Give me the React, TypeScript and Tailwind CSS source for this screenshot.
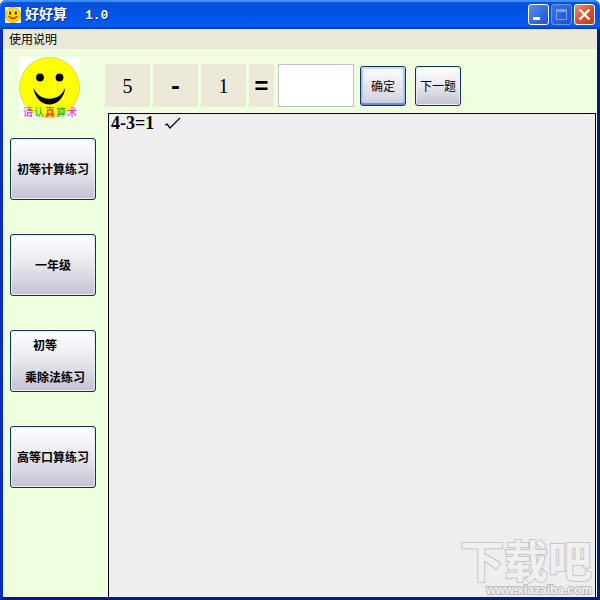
import React from 'react';
import { clsx } from 'clsx';

interface LessonButtonProps {
  children: React.ReactNode;
}

const LESSON_BUTTON =
  'h-[62px] w-full rounded-[3px] border border-[#103458] bg-linear-to-b from-white via-[#e8e7ee] to-[#c3c1d3] text-xs font-bold shadow-[inset_0_0_0_1px_#e6edf3]';

const CAPTION = [
  { char: '请', color: 'text-[#e23bd0]' },
  { char: '认', color: 'text-[#35c04a]' },
  { char: '真', color: 'text-[#f0281e]' },
  { char: '算', color: 'text-[#2fae3e]' },
  { char: '术', color: 'text-[#e23bd0]' },
];

const LessonButton: React.FC<LessonButtonProps> = ({ children }) => (
  <button type="button" className={LESSON_BUTTON}>
    {children}
  </button>
);

const AppIcon = () => (
  <svg viewBox="0 0 16 16" className="size-4 shrink-0" aria-hidden="true">
    <rect width="16" height="16" fill="#fff" />
    <circle cx="8" cy="8" r="7.6" fill="#ffdc00" stroke="#e9a400" strokeWidth="0.8" />
    <circle cx="5" cy="5.500" r="2" fill="#fff3a0" />
    <circle cx="11" cy="5.500" r="2" fill="#fff3a0" />
    <rect x="4.200" y="4.500" width="2" height="3" fill="#3b2500" />
    <rect x="9.800" y="4.500" width="2" height="3" fill="#3b2500" />
    <path d="M3.500 9.500Q8 14.500 12.500 9.500Q8 12 3.500 9.500Z" fill="#d8400e" stroke="#d8400e" />
  </svg>
);

const Smiley = () => (
  <div className="relative size-[61px]">
    <svg viewBox="0 0 61 61" className="size-[61px]" aria-hidden="true">
      <rect width="61" height="61" fill="#fff" />
      <circle cx="30.500" cy="30.500" r="30" fill="#ffff00" stroke="#d8d040" strokeWidth="0.8" />
      <circle cx="21" cy="20.500" r="3.900" fill="#000" />
      <circle cx="40.500" cy="20.500" r="3.900" fill="#000" />
      <path
        d="M14.300 31C16 41 22.500 47.500 30.300 47.500C38.500 47.500 45 41 46.300 31C42.500 38.500 37.500 41.700 30.300 41.700C23.500 41.700 18.500 38.500 14.300 31Z"
        fill="#000"
      />
    </svg>
    <p className="absolute -bottom-px left-1 flex gap-px text-[10px] leading-[15px] font-medium">
      {CAPTION.map(item => (
        <span key={item.char} className={item.color}>
          {item.char}
        </span>
      ))}
    </p>
  </div>
);

const CAPTION_BUTTON = 'flex size-[21px] items-center justify-center rounded-[3px] border';

const TitleBar = () => (
  <header className="flex h-[29px] items-center rounded-t-md bg-linear-to-b from-[#0a50d4] via-[#0054e8] to-[#0a5cf0] px-[5px] text-white shadow-[inset_0_2px_1px_#3d93ff,inset_0_-2px_1px_#0541c4]">
    <AppIcon />
    <h1 className="ml-1 flex items-baseline gap-[18px] text-sm font-bold [text-shadow:1px_1px_#0a2a7c]">
      <span>好好算</span>
      <span className="font-['Liberation_Mono',monospace] text-[13px]">1.0</span>
    </h1>
    <div className="ml-auto flex gap-[2px]">
      <button
        type="button"
        aria-label="最小化"
        className={clsx(CAPTION_BUTTON, 'border-white bg-linear-to-br from-[#5a8cf0] to-[#1d4fd0]')}
      >
        <svg viewBox="0 0 19 19" className="size-[19px]">
          <rect x="4" y="12" width="7" height="3" fill="#fff" />
        </svg>
      </button>
      <button
        type="button"
        aria-label="最大化"
        disabled
        className={clsx(CAPTION_BUTTON, 'border-[#6d95ec] bg-linear-to-br from-[#3d74e6] to-[#1c50d4]')}
      >
        <svg viewBox="0 0 19 19" className="size-[19px]">
          <rect x="4.500" y="4.500" width="10" height="10" fill="none" stroke="#7fa0ee" />
          <rect x="4" y="4" width="11" height="3" fill="#7fa0ee" />
        </svg>
      </button>
      <button
        type="button"
        aria-label="关闭"
        className={clsx(CAPTION_BUTTON, 'border-white bg-linear-to-br from-[#ec8c70] via-[#dc5230] to-[#c03c18]')}
      >
        <svg viewBox="0 0 19 19" className="size-[19px]">
          <path d="M4.500 4.500L14.500 14.500M14.500 4.500L4.500 14.500" stroke="#fff" strokeWidth="2.400" />
        </svg>
      </button>
    </div>
  </header>
);

const Operand: React.FC<{ value: string; className?: string }> = ({ value, className }) => (
  <span className={clsx('flex h-[43px] items-center justify-center bg-[#ece9d8]', className)}>{value}</span>
);

const Exercise = () => (
  <form className="flex items-center pt-[15px] pb-[6px]" onSubmit={e => e.preventDefault()}>
    <div className="flex gap-[3px] font-['Liberation_Serif',serif] text-xl">
      <Operand value="5" className="w-[45px]" />
      <Operand value="-" className="w-[45px] pt-1 font-['Liberation_Mono',monospace] text-2xl font-bold" />
      <Operand value="1" className="w-[45px]" />
      <Operand value="=" className="w-[25px] pt-1 font-['Liberation_Mono',monospace] text-2xl font-bold" />
    </div>
    <input
      type="text"
      aria-label="答案"
      className="ml-1 h-[43px] w-[76px] border border-[#c0c4c8] bg-white px-2 text-xl outline-none"
    />
    <button
      type="submit"
      className="ml-[6px] h-10 w-[46px] rounded-[3px] border border-[#103458] bg-linear-to-b from-white to-[#cfcddd] text-xs shadow-[inset_0_2px_1px_#c2dcfb,inset_0_-2px_1px_#6a88d8,inset_2px_0_1px_#a9c4f4,inset_-2px_0_1px_#a9c4f4]"
    >
      确定
    </button>
    <button
      type="button"
      className="ml-[9px] h-10 w-[46px] rounded-[3px] border border-[#103458] bg-linear-to-b from-white via-[#e8e7ee] to-[#c3c1d3] text-xs whitespace-nowrap shadow-[inset_0_0_0_1px_#e6edf3]"
    >
      下一题
    </button>
  </form>
);

const History = () => (
  <section className="relative mr-px ml-[3px] flex-1 border-x border-t border-black bg-[#eeeeee]">
    <p className="flex items-center gap-[10px] pl-[2px] font-['Liberation_Serif',serif] text-lg leading-[18px] font-bold">
      4-3=1
      <svg viewBox="0 0 17 13" className="h-[13px] w-[17px]" role="img" aria-label="正确">
        <path d="M1 8L3 7L6 11L16 1" fill="none" stroke="#000" strokeWidth="1.300" />
      </svg>
    </p>
    {/* Site mark in the corner, outlined letters */}
    <div className="absolute right-[3px] bottom-px flex flex-col items-end font-bold text-[#f0f0f0] [paint-order:stroke]">
      <span className="text-[44px] leading-[50px] [-webkit-text-stroke:2px_#c6c6c6]">下载吧</span>
      <span className="font-['Liberation_Sans',sans-serif] text-xs leading-3 [-webkit-text-stroke:2px_#bcbcbc]">
        www.xiazaiba.com
      </span>
    </div>
  </section>
);

export default function App() {
  return (
    <div className="flex min-h-screen flex-col bg-white font-['Noto_Sans_CJK_SC',sans-serif] text-black">
      <TitleBar />
      <div className="flex flex-1 flex-col border-x-[3px] border-b-[3px] border-[#0831b8] border-r-[#001a90] border-b-[#001a90] bg-[#efffde]">
        <nav className="flex h-5 items-center bg-[#ece9d8] px-[6px]">
          <button type="button" className="text-xs">
            使用说明
          </button>
        </nav>
        <div className="flex flex-1">
          <aside className="w-[102px] shrink-0 pt-2 pr-[9px] pl-[7px]">
            <div className="pl-[9px]">
              <Smiley />
            </div>
            <div className="mt-5 flex flex-col gap-[34px]">
              <LessonButton>初等计算练习</LessonButton>
              <LessonButton>一年级</LessonButton>
              <LessonButton>
                <span className="flex flex-col gap-4">
                  <span className="pr-4">初等</span>
                  <span className="pl-1">乘除法练习</span>
                </span>
              </LessonButton>
              <LessonButton>高等口算练习</LessonButton>
            </div>
          </aside>
          <main className="flex min-w-0 flex-1 flex-col">
            <Exercise />
            <History />
          </main>
        </div>
      </div>
    </div>
  );
}
